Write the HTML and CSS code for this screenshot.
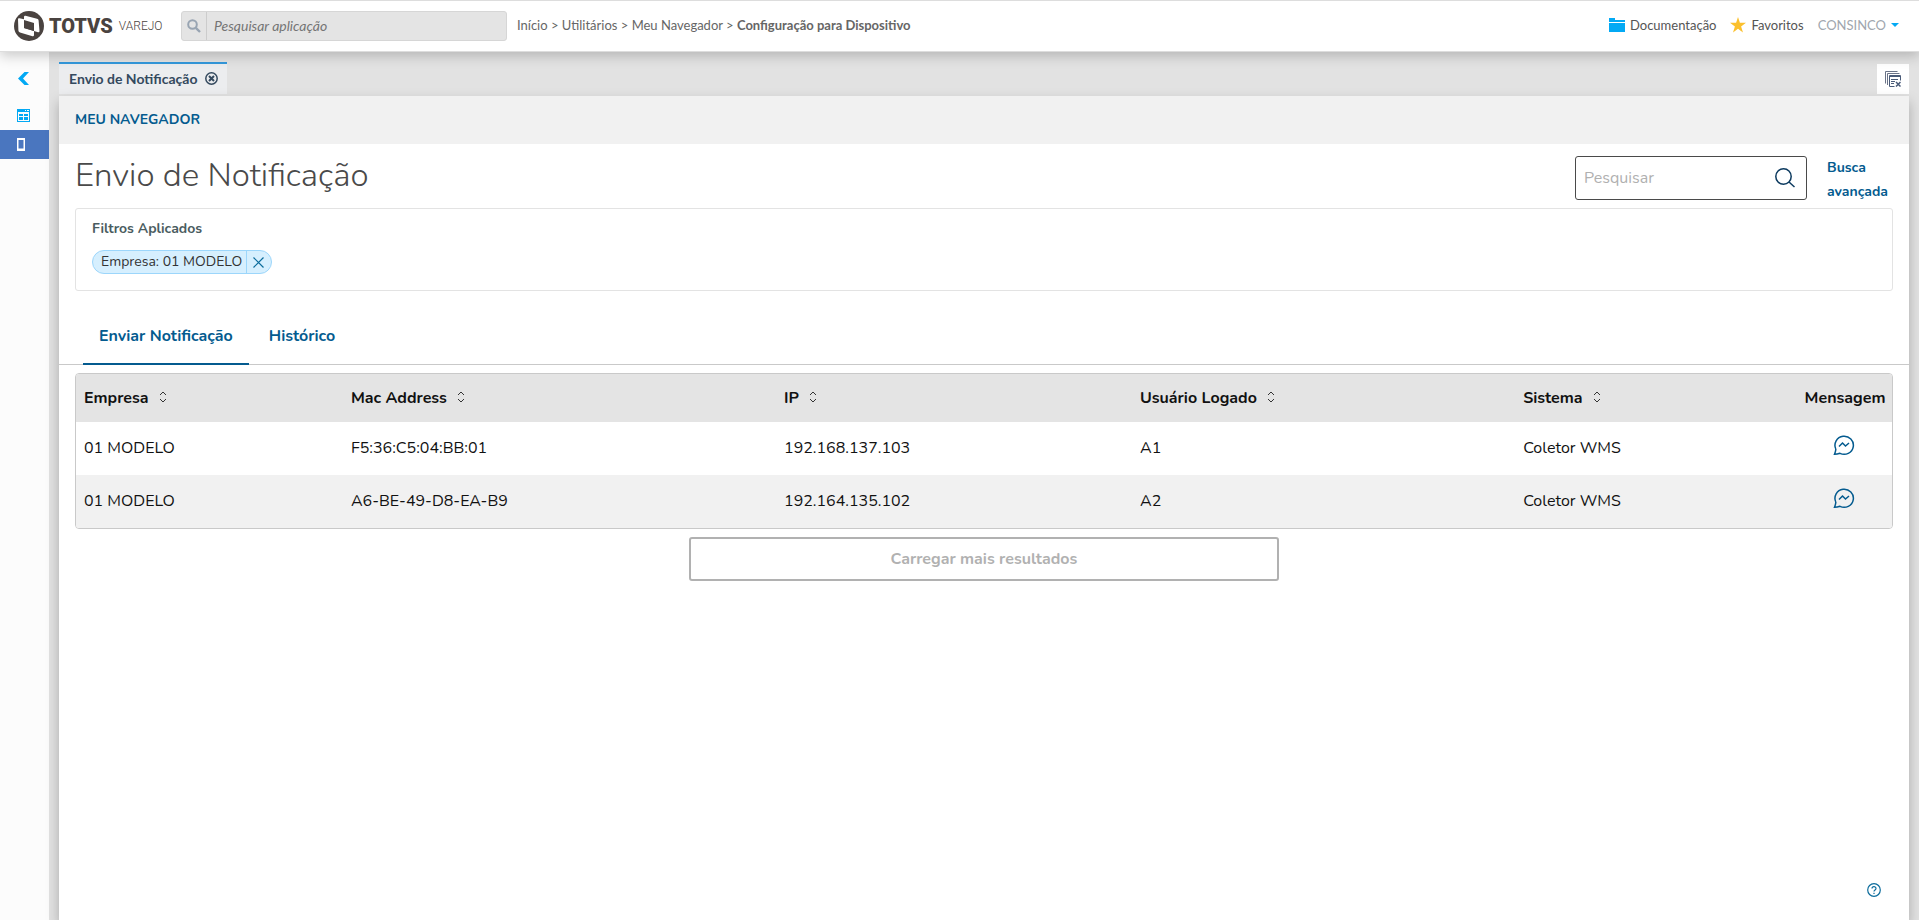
FILE: index.html
```html
<!DOCTYPE html>
<html lang="pt-BR">
<head>
    <meta charset="UTF-8">
    <meta name="viewport" content="width=device-width, initial-scale=1.0">
    <title>Envio de Notificação</title>
    <link rel="stylesheet" href="styles.css">
</head>
<body>
    <header class="topbar">
        <a class="brand" href="#">
            <svg class="brand-mark" viewBox="0 0 30 30">
                <circle cx="15" cy="15" r="15" fill="#4a4340"/>
                <path d="M4 8Q4 7 5.500 7.300L10 8.300V17L20 20V24Q20 25.500 18.500 25.200L6 21.500Q4.500 21 4.400 19.500Z" fill="#fff"/>
                <path d="M10 6Q10 4.500 11.500 4.800L23 7.700Q24.500 8 24.600 9.500L25.500 20Q25.500 21.500 24 21.200L20 20V12L10 9Z" fill="#fff"/>
                <path d="M10 10L19.500 13L20 20L10 17Z" fill="#4a4340"/>
            </svg>
            <span class="brand-name">TOTVS</span>
            <span class="brand-line">VAREJO</span>
        </a>
        <form class="app-search">
            <button type="submit" aria-label="Buscar">
                <svg width="14" height="14" viewBox="0 0 14 14"><circle cx="5.500" cy="5.500" r="4.300" fill="none" stroke="#98a4b2" stroke-width="2"/><path d="M8.800 8.800L13 13" stroke="#98a4b2" stroke-width="2.400"/></svg>
            </button>
            <input type="text" placeholder="Pesquisar aplicação" aria-label="Pesquisar aplicação">
        </form>
        <nav class="breadcrumb">
            <a href="#">Início</a> &gt; <a href="#">Utilitários</a> &gt; <a href="#">Meu Navegador</a> &gt; <b>Configuração para Dispositivo</b>
        </nav>
        <nav class="links">
            <a href="#">
                <svg width="16" height="14" viewBox="0 0 16 14"><path d="M0 0H6V2H16V4H0ZM0 5H16V14H0Z" fill="#03a9f4"/></svg>
                Documentação
            </a>
            <a href="#">
                <svg width="16" height="16" viewBox="0 0 16 16"><path d="M8 0L9.900 5.800H16L11.100 9.500L13 15.400L8 11.800L3 15.400L4.900 9.500L0 5.800H6.100Z" fill="#fbc02d"/></svg>
                Favoritos
            </a>
            <a class="user" href="#">
                CONSINCO
                <svg width="8" height="4" viewBox="0 0 8 4"><path d="M0 0H8L4 4Z" fill="#03a9f4"/></svg>
            </a>
        </nav>
    </header>

    <div class="layout">
        <aside class="sidebar">
            <button aria-label="Recolher menu">
                <svg width="12" height="14" viewBox="0 0 12 14"><path d="M7.500 0H12L6 6.500L12 13H7.500L1 6.500Z" fill="#03a9f4"/></svg>
            </button>
            <button aria-label="Aplicações">
                <svg width="13" height="13" viewBox="0 0 13 13"><path d="M0 0H13V13H0ZM1 3V12H12V3ZM8 1V2H9V1ZM10 1V2H12V1Z" fill="#03a9f4" fill-rule="evenodd"/><path d="M2 5H6V7H2ZM7 5H11V7H7ZM2 8H6V11H2ZM7 8H11V11H7Z" fill="#03a9f4"/></svg>
            </button>
            <button class="active" aria-label="Dispositivo">
                <svg width="8" height="13" viewBox="0 0 8 13"><path d="M0 0H8V13H0ZM1.500 2V10.500H6.500V2Z" fill="#fff" fill-rule="evenodd"/></svg>
            </button>
        </aside>

        <main class="main">
            <div class="window-tabs">
                <div class="window-tab">
                    Envio de Notificação
                    <button aria-label="Fechar aba">
                        <svg width="13" height="13" viewBox="0 0 13 13" fill="none" stroke="#34495e"><circle cx="6.500" cy="6.500" r="5.700" stroke-width="1.500"/><path d="M4 4L9 9M9 4L4 9" stroke-width="2"/></svg>
                    </button>
                </div>
                <button class="close-all" aria-label="Fechar todas">
                    <svg width="16" height="16" viewBox="0 0 16 16" fill="none" stroke="#4a5b78"><path d="M.5 12.500V.5H12.500M2.500 14V2.500H14.500" stroke="#6b7488"/><path d="M9.500 15.500H4.500V4.500H15.500V9.500M4 5.500H16M6 8.500H13M6 10.500H10M6 12.500H9"/><path d="M11 11L15.500 15.500M15.500 11L11 15.500" stroke-width="1.500"/></svg>
                </button>
            </div>

            <section class="panel">
                <div class="panel-menu"><a href="#">MEU NAVEGADOR</a></div>

                <div class="page-head">
                    <h1>Envio de Notificação</h1>
                    <div class="search">
                        <input type="text" placeholder="Pesquisar" aria-label="Pesquisar">
                        <button aria-label="Pesquisar">
                            <svg width="20" height="20" viewBox="0 0 20 20" fill="none" stroke="#0c3a5f" stroke-width="1.500"><circle cx="8.500" cy="8.500" r="7.700"/><path d="M14 14L19.500 19"/></svg>
                        </button>
                    </div>
                    <a class="advanced" href="#">Busca avançada</a>
                </div>

                <div class="filters">
                    <div class="filters-title">Filtros Aplicados</div>
                    <div class="tag">
                        <span>Empresa: 01 MODELO</span>
                        <button aria-label="Remover filtro">
                            <svg width="11" height="11" viewBox="0 0 11 11"><path d="M.5 .5L10.500 10.500M10.500 .5L.5 10.500" stroke="#0c6c9c" stroke-width="1.200"/></svg>
                        </button>
                    </div>
                </div>

                <div class="tabs">
                    <button class="active">Enviar Notificação</button>
                    <button>Histórico</button>
                </div>

                <div class="table-box">
                    <table>
                        <thead>
                            <tr>
                                <th class="col-empresa">Empresa <svg class="sort" viewBox="0 0 8 12"><path d="M1 4L4 1L7 4M1 8L4 11L7 8"/></svg></th>
                                <th class="col-mac">Mac Address <svg class="sort" viewBox="0 0 8 12"><path d="M1 4L4 1L7 4M1 8L4 11L7 8"/></svg></th>
                                <th class="col-ip">IP <svg class="sort" viewBox="0 0 8 12"><path d="M1 4L4 1L7 4M1 8L4 11L7 8"/></svg></th>
                                <th class="col-usuario">Usuário Logado <svg class="sort" viewBox="0 0 8 12"><path d="M1 4L4 1L7 4M1 8L4 11L7 8"/></svg></th>
                                <th class="col-sistema">Sistema <svg class="sort" viewBox="0 0 8 12"><path d="M1 4L4 1L7 4M1 8L4 11L7 8"/></svg></th>
                                <th class="col-mensagem">Mensagem</th>
                            </tr>
                        </thead>
                        <tbody>
                            <tr>
                                <td>01 MODELO</td>
                                <td>F5:36:C5:04:BB:01</td>
                                <td>192.168.137.103</td>
                                <td>A1</td>
                                <td>Coletor WMS</td>
                                <td class="col-mensagem">
                                    <button aria-label="Enviar mensagem">
                                        <svg class="message" viewBox="0 0 22 22"><path d="M2.800 15A9.200 9 0 1 1 7 19.300C5 20 3 20.300 1.500 20.300C2.200 18.500 2.900 17 2.800 15"/><path d="M6 12.500L9.500 9L12.500 12L16 9"/></svg>
                                    </button>
                                </td>
                            </tr>
                            <tr>
                                <td>01 MODELO</td>
                                <td>A6-BE-49-D8-EA-B9</td>
                                <td>192.164.135.102</td>
                                <td>A2</td>
                                <td>Coletor WMS</td>
                                <td class="col-mensagem">
                                    <button aria-label="Enviar mensagem">
                                        <svg class="message" viewBox="0 0 22 22"><path d="M2.800 15A9.200 9 0 1 1 7 19.300C5 20 3 20.300 1.500 20.300C2.200 18.500 2.900 17 2.800 15"/><path d="M6 12.500L9.500 9L12.500 12L16 9"/></svg>
                                    </button>
                                </td>
                            </tr>
                        </tbody>
                    </table>
                </div>

                <button class="load-more" disabled>Carregar mais resultados</button>

                <button class="help" aria-label="Ajuda">
                    <svg width="14" height="14" viewBox="0 0 14 14" fill="none" stroke="#0c6c9c" stroke-width="1.200"><circle cx="7" cy="7" r="6.300"/><path d="M5 5.600C5 3 9 3 9 5.500C9 7 7 6.900 7 8.600M7 9.800V11"/></svg>
                </button>
            </section>
        </main>
    </div>
</body>
</html>
```
FILE: styles.css
```css
* { box-sizing: border-box; }
body { margin: 0; min-height: 100vh; display: flex; flex-direction: column; font-family: Lato, sans-serif; font-size: 13px; color: #555; background: #e2e2e2; }
a { color: inherit; text-decoration: none; }
button { padding: 0; border: 0; background: none; font: inherit; color: inherit; cursor: pointer; }
svg { display: block; }

/* top bar */
.topbar { position: relative; z-index: 1; display: flex; align-items: center; height: 52px; padding: 0 20px 0 14px; background: #fff; border-top: 1px solid #ddd; border-bottom: 1px solid #ddd; box-shadow: 0 4px 12px rgba(0, 0, 0, 0.2); }
.brand { display: flex; align-items: center; width: 167px; color: #4a4340; }
.brand-mark { width: 30px; height: 30px; margin-right: 5px; }
.brand-name { font: 900 20px Roboto, sans-serif; }
.brand-line { margin-left: 6px; font: 300 12px Roboto, sans-serif; }
.app-search { display: flex; width: 326px; height: 30px; border: 1px solid #d6d6d6; border-radius: 3px; background: #e4e4e4; }
.app-search button { width: 25px; padding-left: 5px; border-right: 1px solid #ccc; }
.app-search input { flex: 1; padding: 0 7px 2px; border: 0; background: none; font: italic 14px Lato, sans-serif; }
.app-search input::placeholder { color: #757575; }
.breadcrumb { margin-left: 10px; padding-bottom: 2px; color: #666; }
.links { display: flex; gap: 14px; margin-left: auto; padding-bottom: 2px; }
.links a { display: flex; align-items: center; gap: 5px; }
.links .user { color: #a0a6ae; }

/* side menu */
.layout { flex: 1; display: flex; }
.sidebar { width: 49px; padding-top: 12px; background: #fcfcfc; }
.sidebar button { display: flex; align-items: center; width: 100%; height: 29px; padding-left: 17px; }
.sidebar button:first-child { height: 37px; padding-bottom: 8px; }
.sidebar .active { background: #4a76bf; }

/* opened windows */
.main { flex: 1; display: flex; flex-direction: column; padding: 10px 10px 0; }
.window-tabs { display: flex; justify-content: space-between; align-items: flex-end; height: 34px; padding-bottom: 2px; }
.window-tab { display: flex; align-items: center; gap: 7px; height: 32px; padding: 0 9px 2px 10px; border-top: 2px solid #3498db; background: #ecedef; font-size: 14px; font-weight: bold; color: #34495e; }
.close-all { display: flex; align-items: center; justify-content: center; width: 32px; height: 30px; background: #fff; }

/* page */
.panel { position: relative; flex: 1; background: #fff; box-shadow: 0 6px 12px rgba(0, 0, 0, 0.25); font-family: "Nunito", "Noto Sans", sans-serif; }
.panel-menu { height: 48px; padding: 0 16px; background: #f1f1f1; font-size: 14px; font-weight: 700; line-height: 48px; color: #045b8f; }
.page-head { display: flex; align-items: flex-start; height: 64px; padding: 12px 16px 0; }
h1 { flex: 1; margin: 0; font-size: 33px; font-weight: 300; line-height: 40px; color: #4a4a4a; }
.search { display: flex; align-items: center; width: 232px; height: 44px; padding: 0 11px 0 8px; border: 1px solid #4a4a4a; border-radius: 3px; }
.search input { flex: 1; min-width: 0; padding: 0; border: 0; outline: 0; font: inherit; font-size: 16px; }
.search input::placeholder { color: #b0b0b0; }
.advanced { width: 86px; padding-left: 20px; font-size: 14px; font-weight: bold; line-height: 24px; color: #045b8f; }
.filters { height: 83px; margin: 0 16px; padding: 8px 16px; border: 1px solid #e3e3e3; border-radius: 3px; }
.filters-title { font-size: 14px; font-weight: 700; line-height: 24px; color: #4a5c60; }
.tag { display: inline-flex; height: 24px; margin-top: 9px; border: 1px solid #9cd6fb; border-radius: 12px; background: #d6effe; font-size: 14px; line-height: 21px; color: #333; }
.tag span { padding: 0 4px 0 8px; }
.tag button { width: 25px; padding-left: 6px; border-left: 1px solid #9cd6fb; }
.tabs { display: flex; margin-top: 16px; padding: 0 24px; height: 58px; border-bottom: 1px solid #c9c9c9; }
.tabs button { height: 58px; padding: 2px 16px 0; margin-right: 4px; border-bottom: 2px solid transparent; font-size: 16px; font-weight: 700; color: #045b8f; }
.tabs .active { border-bottom-color: #045b8f; }
.table-box { margin: 8px 16px 0; border: 1px solid #c9c9c9; border-radius: 4px; overflow: hidden; }
table { width: 100%; border-collapse: collapse; table-layout: fixed; font-size: 16px; color: #111; }
th, td { padding: 0 8px; text-align: left; white-space: nowrap; }
th { height: 48px; background: #e4e4e4; font-weight: 700; }
td { height: 53px; padding-bottom: 2px; }
tbody tr:nth-child(2n) { background: #f1f1f1; }
.col-empresa { width: 14.7%; }
.col-mac { width: 23.85%; }
.col-ip { width: 19.6%; }
.col-usuario { width: 21.1%; }
.col-sistema { width: 15.5%; }
.col-mensagem { text-align: center; }
.sort { display: inline-block; width: 8px; height: 12px; margin-left: 6px; fill: none; stroke: #333; }
.message { width: 22px; height: 22px; fill: none; stroke: #045b8f; stroke-width: 1.5; }
.load-more { display: block; width: 590px; height: 44px; margin: 8px auto; border: 2px solid #b1b1b1; border-radius: 3px; font-size: 16px; font-weight: 700; color: #b1b1b1; }
.help { position: absolute; right: 28px; bottom: 23px; }
```
